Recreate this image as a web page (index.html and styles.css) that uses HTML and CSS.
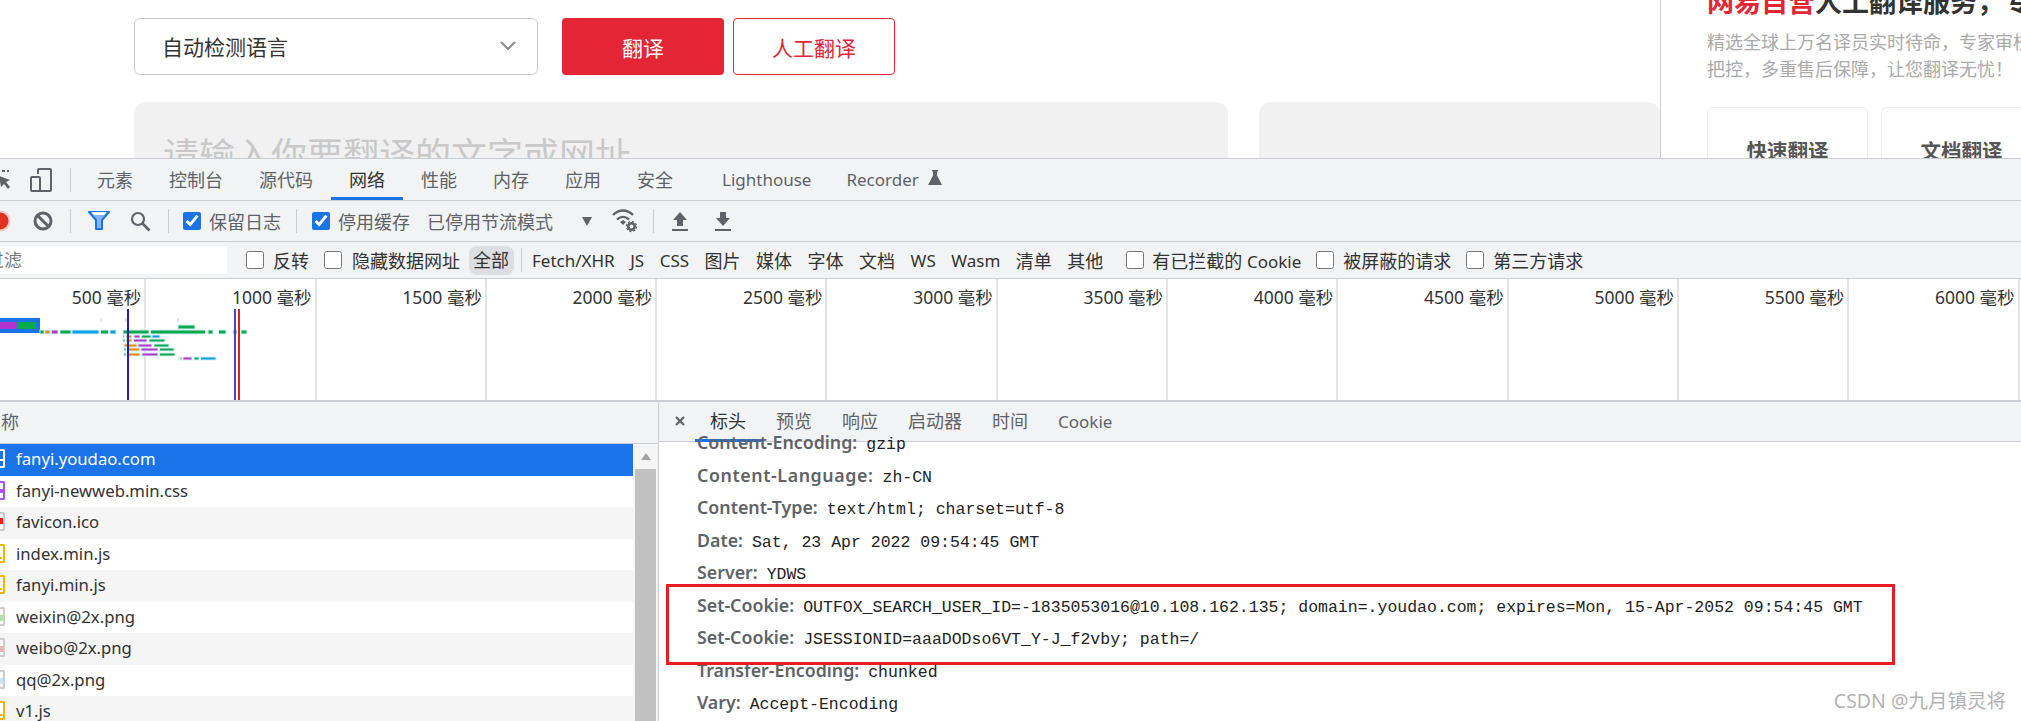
FILE: index.html
```html
<!DOCTYPE html>
<html lang="zh-CN">
<head>
    <meta charset="UTF-8">
    <title>有道翻译 - DevTools</title>
    <link rel="stylesheet" href="styles.css">
</head>
<body>
    <!-- Translate page behind devtools -->
    <div class="page">
        <div class="main">
            <div class="controls">
                <div class="lang-select">
                    <span>自动检测语言</span>
                    <svg width="16" height="10" viewBox="0 0 16 10"><path d="M1 1l7 7 7-7" fill="none" stroke="#8a8a8a" stroke-width="2"/></svg>
                </div>
                <div class="btn btn-red">翻译</div>
                <div class="btn btn-outline">人工翻译</div>
            </div>
            <div class="panels">
                <div class="panel panel-input">请输入你要翻译的文字或网址</div>
                <div class="panel panel-output"></div>
            </div>
        </div>
        <div class="side">
            <div class="side-title"><span class="side-red">网易自营</span>人工翻译服务，专业高效</div>
            <div class="side-text">精选全球上万名译员实时待命，专家审校<br>把控，多重售后保障，让您翻译无忧！</div>
            <div class="side-cards">
                <div class="side-card">快速翻译</div>
                <div class="side-card">文档翻译</div>
            </div>
        </div>
    </div>

    <!-- DevTools -->
    <div class="devtools">
        <div class="main-tabs">
            <svg class="ic-inspect" width="11" height="24" viewBox="0 0 11 24"><path d="M-3 3h12M-3 19h3" fill="none" stroke="#5f6368" stroke-width="2" stroke-dasharray="3 2"/><path d="M-1 8l11 4-4 2 4 5-2 2-4-5-3 3z" fill="#5f6368"/></svg>
            <svg class="ic-device" width="22" height="24" viewBox="0 0 22 24"><path d="M8 6V2a1 1 0 0 1 1-1h11a1 1 0 0 1 1 1v20a1 1 0 0 1-1 1H9" fill="none" stroke="#5f6368" stroke-width="2"/><rect x="1" y="9" width="9" height="14" rx="1" fill="none" stroke="#5f6368" stroke-width="2"/></svg>
            <span class="tb-sep sep-tabs"></span>
            <div class="main-tab">元素</div>
            <div class="main-tab">控制台</div>
            <div class="main-tab">源代码</div>
            <div class="main-tab active">网络</div>
            <div class="main-tab">性能</div>
            <div class="main-tab">内存</div>
            <div class="main-tab">应用</div>
            <div class="main-tab">安全</div>
            <div class="main-tab tab-light">Lighthouse</div>
            <div class="main-tab tab-rec">Recorder</div>
            <svg class="ic-flask" width="14" height="15" viewBox="0 0 14 15"><path d="M4 0h6v1.500H9v4l5 9.500H0l5-9.500v-4H4z" fill="#5f6368"/></svg>
        </div>

        <div class="net-toolbar">
            <svg class="ic-record" width="10" height="22" viewBox="0 0 10 22"><circle cx="0" cy="11" r="10.500" fill="#f6c9c4"/><circle cx="0" cy="11" r="8.500" fill="#e0321f"/></svg>
            <svg class="ic-clear" width="20" height="20" viewBox="0 0 20 20"><circle cx="10" cy="10" r="8" fill="none" stroke="#5f6368" stroke-width="3"/><path d="M4.500 4.500l11 11" stroke="#5f6368" stroke-width="3"/></svg>
            <span class="tb-sep sep-a"></span>
            <svg class="ic-filter" width="22" height="20" viewBox="0 0 22 20"><path d="M1 1h20l-7 8v9H8V9z" fill="#8ab4f8" stroke="#1a73e8" stroke-width="2" stroke-linejoin="round"/><path d="M3 1h16l-3 3H6z" fill="#fff"/></svg>
            <svg class="ic-search" width="21" height="21" viewBox="0 0 21 21"><circle cx="8" cy="8" r="6" fill="none" stroke="#5f6368" stroke-width="2.200"/><path d="M12.500 12.500l7 7" stroke="#5f6368" stroke-width="2.600"/></svg>
            <span class="tb-sep sep-b"></span>
            <input type="checkbox" class="chk chk-log" checked>
            <span class="tool-label lbl-log">保留日志</span>
            <span class="tb-sep sep-c"></span>
            <input type="checkbox" class="chk chk-cache" checked>
            <span class="tool-label lbl-cache">停用缓存</span>
            <span class="tool-label lbl-throttle">已停用节流模式</span>
            <span class="drop-arrow"></span>
            <svg class="ic-wifi" width="26" height="24" viewBox="0 0 26 24"><path d="M1 6c6-6 14-6 20 0M5 10.500c4-3.500 8-3.500 12 0" fill="none" stroke="#5f6368" stroke-width="2.400"/><path d="M8 13l3-2 3 2-3 3z" fill="#5f6368"/><circle cx="19.500" cy="17.500" r="3.200" fill="none" stroke="#5f6368" stroke-width="2.600"/><circle cx="19.500" cy="17.500" r="5" fill="none" stroke="#5f6368" stroke-width="1.400" stroke-dasharray="2 1.900"/></svg>
            <span class="tb-sep sep-d"></span>
            <svg class="ic-up" width="16" height="20" viewBox="0 0 16 20"><path d="M8 1l7 8h-4v6H5V9H1zM0 18h16v2H0z" fill="#5f6368"/></svg>
            <svg class="ic-down" width="16" height="20" viewBox="0 0 16 20"><path d="M5 1h6v6h4l-7 8-7-8h4zM0 18h16v2H0z" fill="#5f6368"/></svg>
        </div>

        <div class="filter-bar">
            <div class="filter-input"><span>过滤</span></div>
            <input type="checkbox" class="chk chk-invert"><span class="filter-label lbl-invert">反转</span>
            <input type="checkbox" class="chk chk-data"><span class="filter-label lbl-data">隐藏数据网址</span>
            <span class="type-all">全部</span>
            <span class="tb-sep sep-types"></span>
            <div class="type-list">
                <span class="en">Fetch/XHR</span><span class="en">JS</span><span class="en">CSS</span><span>图片</span><span>媒体</span><span>字体</span><span>文档</span><span class="en">WS</span><span class="en">Wasm</span><span>清单</span><span>其他</span>
            </div>
            <input type="checkbox" class="chk chk-blocked"><span class="filter-label lbl-blocked">有已拦截的 <span class="en">Cookie</span></span>
            <input type="checkbox" class="chk chk-req"><span class="filter-label lbl-req">被屏蔽的请求</span>
            <input type="checkbox" class="chk chk-third"><span class="filter-label lbl-third">第三方请求</span>
        </div>

        <div class="timeline">
            <div class="tick">500 毫秒</div>
            <div class="tick">1000 毫秒</div>
            <div class="tick">1500 毫秒</div>
            <div class="tick">2000 毫秒</div>
            <div class="tick">2500 毫秒</div>
            <div class="tick">3000 毫秒</div>
            <div class="tick">3500 毫秒</div>
            <div class="tick">4000 毫秒</div>
            <div class="tick">4500 毫秒</div>
            <div class="tick">5000 毫秒</div>
            <div class="tick">5500 毫秒</div>
            <div class="tick">6000 毫秒</div>
            <!-- waterfall overview, y is measured from the top of .timeline -->
            <svg class="overview" width="260" height="121" viewBox="0 0 260 121">
                <g fill="#e6e6e6"><rect x="100" y="39" width="2" height="4"/><rect x="125" y="39" width="2" height="4"/><rect x="177" y="39" width="2" height="4"/></g>
                <rect x="0" y="39" width="40" height="15" fill="#1a73e8"/>
                <rect x="0" y="43" width="16.500" height="7" fill="#b534d0"/>
                <rect x="17" y="43" width="19" height="7" fill="#0aa84f"/>
                <g stroke="#d3f0f2" stroke-width="1">
                    <g fill="#0aa84f">
                        <rect x="178" y="46" width="17" height="4"/>
                        <rect x="40" y="51" width="4" height="4"/><rect x="60" y="51" width="11" height="4"/><rect x="100.500" y="51" width="8" height="4"/>
                        <rect x="123" y="51" width="26" height="4"/><rect x="150.500" y="51" width="55" height="4"/><rect x="208" y="51" width="5" height="4"/>
                        <rect x="218.500" y="51" width="7.500" height="4"/><rect x="233" y="51" width="4" height="4"/><rect x="241" y="51" width="6" height="4"/>
                        <rect x="141.500" y="56" width="9.500" height="3"/><rect x="149" y="60" width="16" height="3"/><rect x="154" y="65" width="15" height="3"/>
                        <rect x="159.500" y="69" width="14.500" height="3"/><rect x="159.500" y="74" width="15.500" height="3"/><rect x="194" y="78" width="5" height="3"/>
                    </g>
                    <g fill="#f08a00">
                        <rect x="45" y="51" width="5" height="4"/><rect x="126" y="56" width="6" height="3"/><rect x="126" y="60" width="6" height="3"/>
                        <rect x="124" y="65" width="13" height="3"/><rect x="127" y="69" width="13" height="3"/><rect x="127" y="74" width="13" height="3"/><rect x="180" y="78" width="2" height="3"/>
                    </g>
                    <g fill="#b534d0">
                        <rect x="51.500" y="51" width="6.500" height="4"/><rect x="134" y="56" width="6" height="3"/><rect x="133.500" y="60" width="13.500" height="3"/>
                        <rect x="138" y="65" width="14" height="3"/><rect x="141" y="69" width="17" height="3"/><rect x="142" y="74" width="16" height="3"/><rect x="183" y="78" width="9" height="3"/>
                    </g>
                    <g fill="#0c9fe8">
                        <rect x="72" y="51" width="27" height="4"/><rect x="110" y="51" width="6" height="4"/><rect x="152" y="56" width="8" height="3"/><rect x="200.500" y="78" width="15.500" height="3"/>
                    </g>
                    <g fill="#1c9a90">
                        <rect x="123" y="56" width="1.500" height="3"/><rect x="123" y="60" width="2" height="3"/><rect x="124" y="69" width="2" height="3"/><rect x="124" y="74" width="2" height="3"/><rect x="178" y="78" width="1" height="3"/>
                    </g>
                </g>
                <rect x="127" y="30" width="2" height="91" fill="#2a1fb5"/>
                <rect x="234" y="30" width="2" height="91" fill="#4a44c4"/>
                <rect x="238" y="30" width="2" height="91" fill="#dc1f1f"/>
            </svg>
        </div>

        <div class="split">
            <div class="requests">
                <div class="req-head"><span>称</span></div>
                <div class="req-body">
                    <div class="req-rows">
                        <div class="req-row selected"><span class="file-ic ic-doc"></span>fanyi.youdao.com</div>
                        <div class="req-row"><span class="file-ic ic-css"></span>fanyi-newweb.min.css</div>
                        <div class="req-row"><span class="file-ic ic-ico"></span>favicon.ico</div>
                        <div class="req-row"><span class="file-ic ic-js"></span>index.min.js</div>
                        <div class="req-row"><span class="file-ic ic-js"></span>fanyi.min.js</div>
                        <div class="req-row"><span class="file-ic ic-wx"></span>weixin@2x.png</div>
                        <div class="req-row"><span class="file-ic ic-wb"></span>weibo@2x.png</div>
                        <div class="req-row"><span class="file-ic ic-qq"></span>qq@2x.png</div>
                        <div class="req-row"><span class="file-ic ic-js"></span>v1.js</div>
                    </div>
                    <div class="scrollbar">
                        <div class="scroll-up"></div>
                        <div class="scroll-thumb"></div>
                    </div>
                </div>
            </div>

            <div class="details">
                <div class="detail-tabs">
                    <svg class="ic-close" width="12" height="12" viewBox="0 0 12 12"><path d="M2 2l8 8M10 2l-8 8" stroke="#5f6368" stroke-width="2.200"/></svg>
                    <div class="detail-tab active">标头</div>
                    <div class="detail-tab">预览</div>
                    <div class="detail-tab">响应</div>
                    <div class="detail-tab">启动器</div>
                    <div class="detail-tab">时间</div>
                    <div class="detail-tab en">Cookie</div>
                </div>
                <div class="headers">
                    <div class="header-row"><b>Content-Encoding:</b><code>gzip</code></div>
                    <div class="header-row row-lang"><b>Content-Language:</b><code>zh-CN</code></div>
                    <div class="header-row"><b>Content-Type:</b><code>text/html; charset=utf-8</code></div>
                    <div class="header-row"><b>Date:</b><code>Sat, 23 Apr 2022 09:54:45 GMT</code></div>
                    <div class="header-row"><b>Server:</b><code>YDWS</code></div>
                    <div class="header-row"><b>Set-Cookie:</b><code>OUTFOX_SEARCH_USER_ID=-1835053016@10.108.162.135; domain=.youdao.com; expires=Mon, 15-Apr-2052 09:54:45 GMT</code></div>
                    <div class="header-row"><b>Set-Cookie:</b><code>JSESSIONID=aaaDODso6VT_Y-J_f2vby; path=/</code></div>
                    <div class="header-row"><b>Transfer-Encoding:</b><code>chunked</code></div>
                    <div class="header-row"><b>Vary:</b><code>Accept-Encoding</code></div>
                </div>
            </div>
        </div>
    </div>

    <!-- Annotation and watermark on top of the screenshot -->
    <div class="red-box"></div>
    <div class="watermark">CSDN @九月镇灵将</div>
</body>
</html>
```

FILE: styles.css
```css
* {
    margin: 0;
    padding: 0;
    box-sizing: border-box;
}

html, body {
    height: 721px;
    overflow: hidden;
}

body {
    position: relative;
    background: #fff;
    font-family: "Noto Sans", "Noto Sans CJK SC", sans-serif;
    color: #333;
}

.en {
    font-size: 17px;
}

/* Page behind devtools */
.page {
    display: flex;
    height: 158px;
    overflow: hidden;
}

.main {
    flex: 1;
    padding: 18px 0 0 134px;
}

.controls {
    display: flex;
    height: 57px;
}

.lang-select {
    width: 404px;
    border: 1px solid #ccc;
    border-radius: 6px;
    display: flex;
    align-items: center;
    justify-content: space-between;
    padding: 0 21px 2px 27px;
    font-size: 21px;
    color: #333;
}

.btn {
    width: 162px;
    border-radius: 4px;
    display: flex;
    align-items: center;
    justify-content: center;
    font-size: 21px;
}

.btn-red {
    margin-left: 24px;
    background: #e42535;
    color: #fff;
}

.btn-outline {
    margin-left: 9px;
    border: 1px solid #e42535;
    color: #e42535;
}

.panels {
    display: flex;
    gap: 31px;
    margin-top: 27px;
    height: 120px;
}

.panel {
    background: #f1f1f1;
    border-radius: 12px 12px 0 0;
}

.panel-input {
    width: 1094px;
    padding: 29px 0 0 29px;
    font-size: 36px;
    line-height: 50px;
    color: #c9c9c9;
}

.panel-output {
    flex: 1;
}

.side {
    width: 361px;
    flex: none;
    border-left: 1px solid #ccc;
    padding-left: 46px;
    overflow: hidden;
    white-space: nowrap;
}

.side-title {
    margin-top: -18px;
    font-size: 27px;
    line-height: 40px;
    font-weight: 700;
    color: #333;
}

.side-red {
    color: #e42535;
}

.side-text {
    margin-top: 7px;
    font-size: 18px;
    line-height: 27px;
    color: #aaa;
}

.side-cards {
    display: flex;
    gap: 13px;
    margin-top: 24px;
}

.side-card {
    flex: none;
    width: 161px;
    height: 100px;
    padding-top: 27px;
    border: 1px solid #eee;
    border-radius: 6px;
    text-align: center;
    font-size: 20.500px;
    font-weight: 700;
    color: #555;
}

/* DevTools */
.devtools {
    height: 563px;
    background: #fff;
    border-top: 1px solid #cacdd1;
    overflow: hidden;
}

.main-tabs, .net-toolbar, .filter-bar {
    display: flex;
    align-items: center;
    background: #f1f3f4;
    border-bottom: 1px solid #cacdd1;
    white-space: nowrap;
    color: #5f6368;
}

.main-tabs {
    height: 42px;
    align-items: stretch;
}

.tb-sep {
    flex: none;
    width: 1px;
    height: 24px;
    background: #cacdd1;
}

.main-tabs svg, .main-tabs .tb-sep {
    align-self: center;
}

.ic-device { margin-left: 19px; }
.sep-tabs { margin-left: 18px; }

.main-tab {
    padding: 2px 18px 0;
    font-size: 18px;
    line-height: 38px;
    border-bottom: 3px solid transparent;
    height: 41px;
}

.main-tab:first-of-type {
    margin-left: 8px;
}

.main-tab.active {
    color: #333;
    border-bottom-color: #1a73e8;
}

.tab-light { margin-left: 13px; font-size: 17px; }
.tab-rec { padding-right: 0; font-size: 17px; margin-left: -1px; }
.ic-flask { margin-left: 9px; margin-top: -4px; }

.net-toolbar {
    height: 41px;
}

.ic-clear { margin-left: 23px; }
.sep-a { margin-left: 17px; }
.ic-filter { margin-left: 17px; }
.ic-search { margin-left: 20px; }
.sep-b { margin-left: 17px; }
.chk-log { margin-left: 14px; }
.lbl-log { margin-left: 8px; }
.sep-c { margin-left: 15px; }
.chk-cache { margin-left: 15px; }
.lbl-cache { margin-left: 8px; }
.lbl-throttle { margin-left: 17px; }
.drop-arrow {
    margin-left: 29px;
    width: 0;
    height: 0;
    border-left: 5.500px solid transparent;
    border-right: 5.500px solid transparent;
    border-top: 9px solid #5f6368;
}
.ic-wifi { margin-left: 20px; }
.sep-d { margin-left: 15px; }
.ic-up { margin-left: 18px; }
.ic-down { margin-left: 27px; }

.tool-label {
    font-size: 18px;
}

.chk {
    flex: none;
    width: 18px;
    height: 18px;
    accent-color: #1a73e8;
}

.filter-bar {
    height: 37px;
    color: #333;
    font-size: 18px;
}

.filter-input {
    flex: none;
    width: 227px;
    height: 27px;
    background: #fff;
    overflow: hidden;
    line-height: 27px;
    color: #757575;
}

.filter-input span {
    margin-left: -14px;
}

.chk-invert { margin-left: 19px; }
.lbl-invert { margin-left: 9px; }
.chk-data { margin-left: 15px; }
.lbl-data { margin-left: 10px; }

.type-all {
    margin-left: 9px;
    padding: 0 4px;
    width: 45px;
    height: 29px;
    line-height: 28px;
    border-radius: 8px;
    background: #dcdee1;
}

.sep-types { margin-left: 7px; }

.type-list {
    display: flex;
    align-items: center;
    gap: 15.500px;
    margin-left: 10px;
}

.chk-blocked { margin-left: 23px; }
.lbl-blocked { margin-left: 8px; }
.chk-req { margin-left: 15px; }
.lbl-req { margin-left: 9px; }
.chk-third { margin-left: 15px; }
.lbl-third { margin-left: 9px; }

/* Timeline */
.timeline {
    position: relative;
    display: flex;
    height: 123px;
    padding-left: 0;
    background: #fff;
    border-bottom: 2px solid #cacdd1;
    overflow: hidden;
}

.tick {
    flex: 0 0 170.300px;
    border-right: 2px solid #e3e3e3;
    padding: 6px 3px 0 0;
    text-align: right;
    font-size: 17.500px;
    line-height: 24px;
    color: #333;
    white-space: nowrap;
}

.tick:first-child {
    margin-left: -24px;
}

.overview {
    position: absolute;
    left: 0;
    top: 0;
}

/* Request list + details */
.split {
    display: flex;
    height: 319px;
}

.requests {
    flex: none;
    width: 659px;
    border-right: 1px solid #cacdd1;
}

.req-head {
    height: 42px;
    background: #f1f3f4;
    border-bottom: 1px solid #cacdd1;
    padding-left: 1px;
    font-size: 18px;
    line-height: 41px;
    color: #5f6368;
}

.req-body {
    display: flex;
}

.req-rows {
    flex: none;
    width: 633px;
}

.req-row {
    display: flex;
    align-items: center;
    height: 31.500px;
    padding-bottom: 2px;
    font-size: 16.700px;
    color: #333;
}

.req-row:nth-child(odd) {
    background: #f5f5f5;
}

.req-row.selected {
    background: #1a73e8;
    color: #fff;
}

.file-ic {
    flex: none;
    width: 5px;
    height: 19px;
    margin-right: 11px;
    background: #fff;
    border: 2px solid #ccc;
    border-left: none;
    border-radius: 0 2px 2px 0;
}

.ic-doc { border-color: #fff; background: #1a73e8 linear-gradient(#fff, #fff) left 8px / 3px 2px no-repeat; }
.ic-css { border-color: #a855f7; background: linear-gradient(#a855f7, #a855f7) left 6px / 3px 4px no-repeat; }
.ic-ico { background: linear-gradient(#e62020, #e62020) left 4px / 3px 6px no-repeat #fff; }
.ic-js { border-color: #f4b400; background: linear-gradient(#f4b400, #f4b400) left 11px / 2px 2px no-repeat #fff; }
.ic-wx { background: linear-gradient(#aadfb0, #aadfb0) left 6px / 3px 6px no-repeat #fff; }
.ic-wb { background: linear-gradient(#f6b4bc, #f6b4bc) left 6px / 3px 6px no-repeat #fff; }
.ic-qq { background: linear-gradient(#cfe2f3, #cfe2f3) left 6px / 3px 6px no-repeat #fff; }

.scrollbar {
    flex: 1;
    padding: 0 2px;
    background: #f5f5f5;
}

.scroll-up {
    width: 0;
    height: 0;
    margin: 9px auto 0;
    border-left: 5.500px solid transparent;
    border-right: 5.500px solid transparent;
    border-bottom: 7px solid #a3a3a3;
}

.scroll-thumb {
    height: 260px;
    margin-top: 9px;
    background: #c1c1c1;
}

.details {
    flex: 1;
    min-width: 0;
    overflow: hidden;
}

.detail-tabs {
    display: flex;
    align-items: stretch;
    height: 40px;
    background: #f1f3f4;
    border-bottom: 1px solid #cacdd1;
    color: #5f6368;
    font-size: 18px;
}

.ic-close {
    align-self: center;
    margin: -2px 0 0 15px;
}

.detail-tab {
    padding: 0 15px;
    line-height: 39px;
    border-bottom: 3px solid transparent;
    height: 40px;
}

.detail-tab:first-of-type {
    margin-left: 9px;
}

.detail-tab.active {
    color: #333;
    border-bottom-color: #1a73e8;
}

.headers {
    margin-top: -16px;
    padding-left: 38px;
}

.header-row {
    display: flex;
    align-items: baseline;
    gap: 9px;
    height: 32.500px;
    line-height: 32.500px;
    white-space: nowrap;
}

.header-row b {
    font-size: 17.800px;
    font-weight: 600;
    color: #5f6368;
}

.row-lang b {
    letter-spacing: 0.6px;
}

.header-row code {
    font-family: "Liberation Mono", monospace;
    font-size: 16.500px;
    color: #222;
}

/* Overlays */
.red-box {
    position: absolute;
    left: 666px;
    top: 584px;
    width: 1229px;
    height: 81px;
    border: 3px solid #e81c24;
}

.watermark {
    position: absolute;
    right: 15px;
    top: 688px;
    font-size: 19.500px;
    line-height: 26px;
    color: rgba(110, 110, 110, 0.55);
}
```
